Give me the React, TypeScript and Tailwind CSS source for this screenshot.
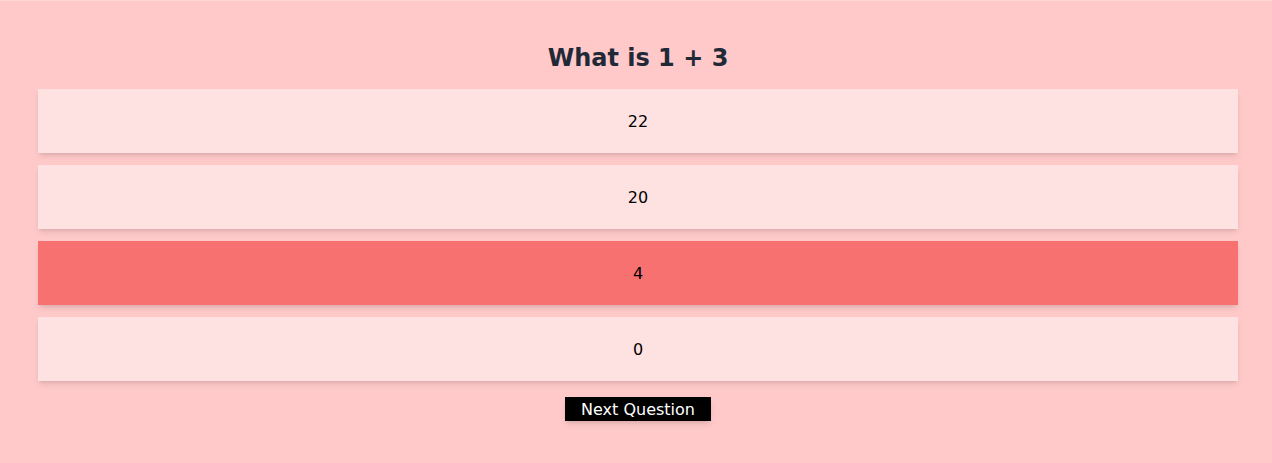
import { useState } from 'react';

const OPTIONS = ['22', '20', '4', '0'];

export default function App() {
  const [selected, setSelected] = useState<string>('4');

  return (
    <div
      className="min-h-[463px] bg-[#ffc9c9] border-t border-[#ffd6d6] pt-10 pb-10 pl-[38px]"
      style={{ fontFamily: '"DejaVu Sans", sans-serif' }}
    >
      <div className="w-[1200px] flex flex-col items-center">
        <h1 className="text-2xl font-bold text-[#1f2937] leading-8 mb-4 pt-px">What is 1 + 3</h1>

        <div className="w-full flex flex-col gap-3 -mt-px">
          {OPTIONS.map((opt) => (
            <button
              key={opt}
              onClick={() => setSelected(opt)}
              className={`w-full h-16 pt-0.5 flex items-center justify-center text-base text-black shadow-md ${
                selected === opt ? 'bg-[#f87171]' : 'bg-[#fee2e2]'
              }`}
            >
              {opt}
            </button>
          ))}
        </div>

        <button className="mt-4 h-6 pt-px px-4 bg-black text-white text-base leading-6 shadow-md">
          Next Question
        </button>
      </div>
    </div>
  );
}
